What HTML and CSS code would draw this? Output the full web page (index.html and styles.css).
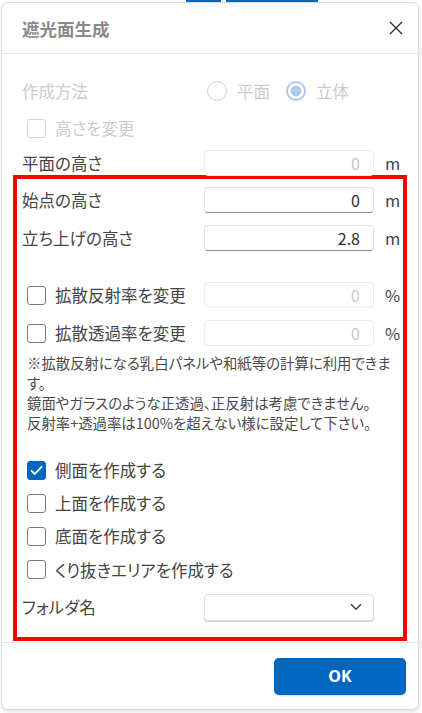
FILE: index.html
```html
<!DOCTYPE html>
<html lang="ja">
<head>
<meta charset="utf-8">
<title>遮光面生成</title>
<link rel="stylesheet" href="styles.css">
</head>
<body>
<div class="strip"><span class="bar bar-a"></span><span class="bar bar-b"></span></div>
<div class="dialog">
  <header class="dlg-head">
    <h1 class="title">遮光面生成</h1>
    <button class="close" aria-label="閉じる">
      <svg width="14" height="14" viewBox="0 0 14 14"><path d="M1 1L13 13M13 1L1 13" stroke="#303030" stroke-width="1.3" fill="none"/></svg>
    </button>
  </header>
  <div class="dlg-body">
    <div class="plain">
      <div class="row r-method">
        <span class="label disabled">作成方法</span>
        <div class="radios">
          <span class="radio-opt"><span class="radio"></span><span class="disabled-text">平面</span></span>
          <span class="radio-opt"><span class="radio on"></span><span class="disabled-text">立体</span></span>
        </div>
      </div>
      <div class="row r-change">
        <span class="cb-wrap"><span class="cb dis"></span><span class="disabled-text">高さを変更</span></span>
      </div>
      <div class="row r-plane">
        <span class="label">平面の高さ</span>
        <span class="input dis">0</span>
        <span class="unit">m</span>
      </div>
    </div>
    <section class="highlight">
      <div class="row">
        <span class="label">始点の高さ</span>
        <span class="input">0</span>
        <span class="unit">m</span>
      </div>
      <div class="row r-gap12">
        <span class="label">立ち上げの高さ</span>
        <span class="input">2.8</span>
        <span class="unit">m</span>
      </div>
      <div class="row r-gap31">
        <span class="cb-wrap"><span class="cb"></span><span class="label">拡散反射率を変更</span></span>
        <span class="input dis">0</span>
        <span class="unit">%</span>
      </div>
      <div class="row r-gap12">
        <span class="cb-wrap"><span class="cb"></span><span class="label">拡散透過率を変更</span></span>
        <span class="input dis">0</span>
        <span class="unit">%</span>
      </div>
      <p class="note">※拡散反射になる乳白パネルや和紙等の計算に利用できま<br>す。<br>鏡面やガラスのような正透過、正反射は考慮できません。<br>反射率+透過率は100%を超えない様に設定して下さい。</p>
      <div class="checks">
        <span class="cb-wrap"><span class="cb on"><svg width="13" height="11" viewBox="0 0 13 11"><path d="M1.5 5.8L4.8 9L11.5 1.8" stroke="#fff" stroke-width="1.8" fill="none" stroke-linecap="round" stroke-linejoin="round"/></svg></span><span class="label">側面を作成する</span></span>
        <span class="cb-wrap"><span class="cb"></span><span class="label">上面を作成する</span></span>
        <span class="cb-wrap"><span class="cb"></span><span class="label">底面を作成する</span></span>
        <span class="cb-wrap"><span class="cb"></span><span class="label">くり抜きエリアを作成する</span></span>
      </div>
      <div class="row r-folder">
        <span class="label">フォルダ名</span>
        <span class="select"><svg width="12" height="8" viewBox="0 0 12 8"><path d="M1 1.2L6 6.2L11 1.2" stroke="#404040" stroke-width="1.5" fill="none"/></svg></span>
      </div>
    </section>
  </div>
  <footer class="dlg-foot">
    <button class="ok">OK</button>
  </footer>
</div>
</body>
</html>
```
FILE: styles.css
```css
* { box-sizing: border-box; }
html, body { margin: 0; padding: 0; background: #fff; }
body {
  font-family: "Noto Sans CJK JP", "Noto Sans", sans-serif;
  font-feature-settings: "palt";
  color: #444;
  font-size: 16.5px;
  width: 422px;
  height: 713px;
  overflow: hidden;
}
.strip { height: 2px; display: flex; gap: 5px; padding-left: 186px; }
.bar { display: block; height: 2px; background: #0067c0; }
.bar-a { width: 35px; }
.bar-b { width: 92px; }

.dialog {
  margin-left: 1px;
  width: 418px;
  border: 1px solid #dcdcdc;
  border-radius: 7px;
  background: #fff;
  box-shadow: 1px 2px 4px rgba(0,0,0,0.12);
}
.dlg-head {
  height: 51px;
  border-bottom: 1px solid #e6e6e6;
  display: flex;
  align-items: center;
  justify-content: space-between;
  padding: 0 15px 0 20px;
}
.title {
  margin: 0;
  font-size: 17.5px;
  font-weight: 700;
  color: #8a8a8a;
}
.close {
  border: 0;
  background: none;
  padding: 0;
  width: 14px;
  height: 14px;
  display: flex;
}
.dlg-body { padding: 24px 11px 0 11px; }
.plain { padding-left: 9px; }

.row {
  display: grid;
  grid-template-columns: 182px 170px 1fr;
  align-items: center;
  height: 26px;
}
.r-change { margin-top: 11px; }
.r-plane { margin-top: 9px; }
.r-gap12 { margin-top: 12px; }
.r-gap31 { margin-top: 31px; }
.r-folder { margin-top: 11px; height: 27px; }

.label { white-space: nowrap; line-height: 1; }
.disabled, .disabled-text { color: #cbcbcb; white-space: nowrap; line-height: 1; }

.radios { display: flex; align-items: center; gap: 16px; padding-left: 3px; }
.radio-opt { display: flex; align-items: center; gap: 10px; }
.radio {
  width: 20px; height: 20px;
  border-radius: 50%;
  border: 1.5px solid #d2d2d2;
  background: #fff;
}
.radio.on {
  border: 2px solid #abcbef;
  background: radial-gradient(circle, #abcbef 0 5px, #fff 5.6px);
}

.cb-wrap { display: flex; align-items: center; gap: 9px; padding-left: 5px; }
.cb {
  width: 19px; height: 19px;
  border: 1.5px solid #7b7b7b;
  border-radius: 3px;
  background: #fff;
  display: flex; align-items: center; justify-content: center;
  flex: none;
}
.cb.dis { border-color: #d4d4d4; }
.cb.on { background: #0067c0; border-color: #0067c0; }

.input {
  height: 26px;
  border: 1px solid #e3e3e3;
  border-bottom-color: #8a8a8a;
  border-radius: 4px;
  text-align: right;
  padding-right: 13px;
  line-height: 24px;
  font-size: 16px;
  color: #303030;
  background: #fff;
}
.input.dis { border-color: #ececec; color: #c8c8c8; }
.unit { padding-left: 11px; color: #444; line-height: 1; }

.highlight {
  margin-top: -1px;
  border: 4px solid #ff0000;
  padding: 8px 0 16px 5px;
}
.note {
  margin: 7px 0 0 0;
  padding-left: 5px;
  white-space: nowrap;
  font-size: 14.4px;
  line-height: 20px;
  color: #4a4a4a;
}
.checks {
  margin-top: 24px;
  display: flex;
  flex-direction: column;
  gap: 7.3px;
}
.checks .cb-wrap { height: 26px; }

.select {
  height: 27px;
  border: 1px solid #e0e0e0;
  border-radius: 4px;
  box-shadow: 0 1px 1px rgba(0,0,0,0.18);
  display: flex;
  align-items: center;
  justify-content: flex-end;
  padding-right: 11px;
  background: #fff;
}

.dlg-body + .dlg-foot { margin-top: 1px; }
.dlg-foot {
  border-top: 1px solid #e6e6e6;
  padding: 15px 12px 14px 0;
  display: flex;
  justify-content: flex-end;
}
.ok {
  width: 132px;
  height: 37px;
  border: 0;
  border-radius: 5px;
  background: #0067c0;
  color: #fff;
  font-family: "Noto Sans", sans-serif;
  font-weight: 700;
  font-size: 16px;
  box-shadow: 0 1px 2px rgba(0,0,0,0.15);
}
```
